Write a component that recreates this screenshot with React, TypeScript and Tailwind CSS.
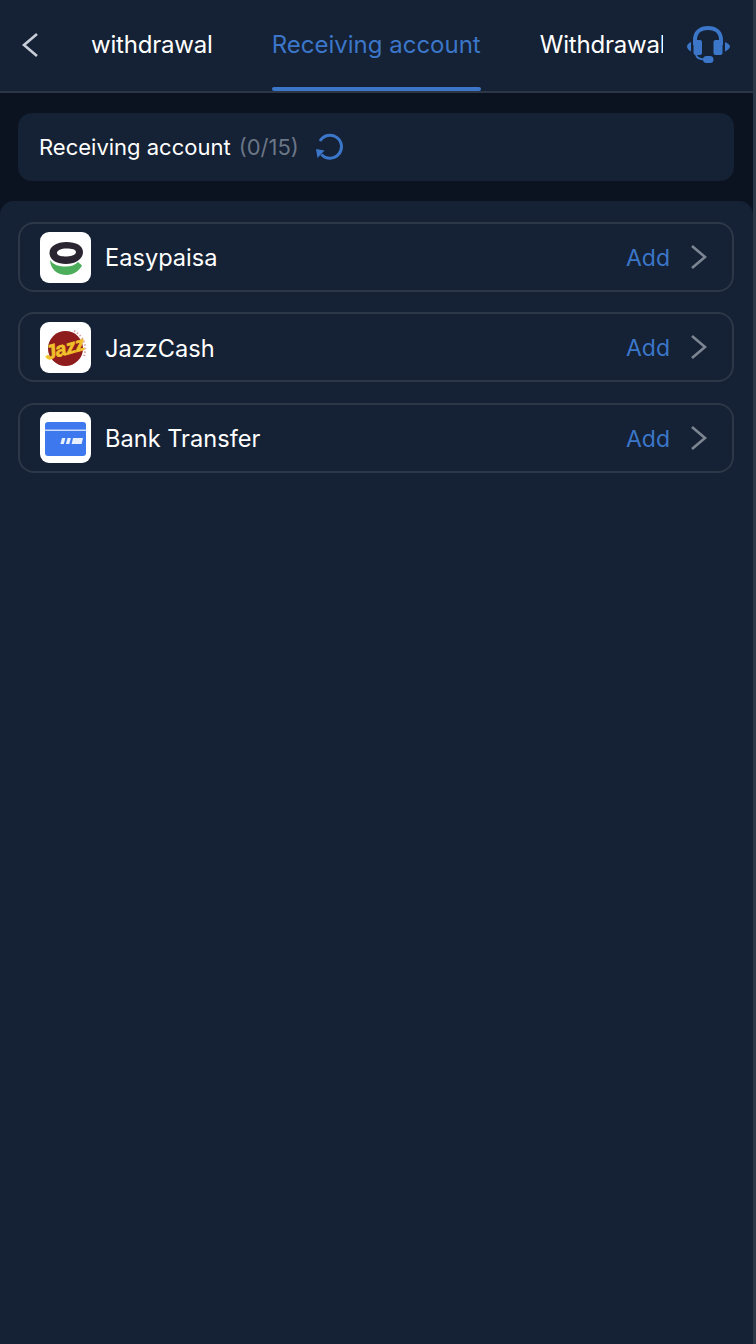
function RefreshIcon() {
  return (
    <svg width="28" height="28" viewBox="0 0 28 28" fill="none">
      <path d="M5 8A11.5 11.5 0 1 1 6.5 21.5" stroke="#3b76c9" strokeWidth="3" />
      <path d="M1 16L9.5 17.5L2.5 25Z" fill="#3b76c9" />
    </svg>
  )
}

function HeadsetIcon() {
  return (
    <svg width="46" height="40" viewBox="0 0 46 40" fill="none">
      <path d="M10 20V15C10 7 15.5 3 23 3C30.5 3 36 7 36 15V20" stroke="#3b76c9" strokeWidth="4" />
      <rect x="8.5" y="15" width="8.5" height="15" rx="2" fill="#3b76c9" />
      <rect x="28.5" y="15" width="9" height="15" rx="2" fill="#3b76c9" />
      <path d="M6 17C3.5 18 2 20 2 21.5C2 23 3.5 25.5 6 26.5Z" fill="#3b76c9" />
      <path d="M40 17C42.5 18 45 20 45 21.5C45 23 42.5 25.5 40 26.5Z" fill="#3b76c9" />
      <path d="M11 30C12 33 15 34.5 20 34.5" stroke="#3b76c9" strokeWidth="2" />
      <rect x="18" y="31" width="10.5" height="7" rx="3.5" fill="#3b76c9" />
    </svg>
  )
}

function Chevron({ dir, color }: { dir: 'left' | 'right'; color: string }) {
  return (
    <svg width="18" height="26" viewBox="0 0 18 26" fill="none">
      <path
        d={dir === 'left' ? 'M16 2L3 13L16 24' : 'M2 2L15 13L2 24'}
        stroke={color}
        strokeWidth="2.6"
      />
    </svg>
  )
}

function EasypaisaLogo() {
  return (
    <svg width="51" height="51" viewBox="0 0 51 51" fill="none">
      <path d="M10 28C10.5 37 17 43 27 43C33 43 38.5 39.5 42 33.5L38 30C35 33 31 34.5 26 34.5C19 34.5 13.5 33 10 28Z" fill="#4cae5b" />
      <path
        fillRule="evenodd"
        d="M9.5 21C9.5 14 17 10 26.5 10C36 10 43 13.5 43 20C43 27 35.5 32 26 32C17 32 9.5 28 9.5 21ZM17 21C17 23.5 21 24.5 26.5 24.5C32 24.5 36 22.5 36 20C36 17.5 32 16.5 26.5 16.5C21 16.5 17 18.5 17 21Z"
        fill="#2a2530"
      />
    </svg>
  )
}

function JazzLogo() {
  return (
    <svg width="51" height="51" viewBox="0 0 51 51" fill="none">
      <path d="M34 9A20 20 0 0 1 44 34" stroke="#d9a9a4" strokeWidth="2" strokeDasharray="1.5 2" />
      <circle cx="25.5" cy="26.5" r="17.5" fill="#8f1c1c" />
      <text
        x="25"
        y="33"
        textAnchor="middle"
        transform="rotate(-15 25 28)"
        fontFamily="'Liberation Sans', sans-serif"
        fontWeight="700"
        fontStyle="italic"
        fontSize="20"
        fill="#f0c12a"
        stroke="#f0c12a"
        strokeWidth="0.7"
        letterSpacing="-0.5"
      >
        Jazz
      </text>
    </svg>
  )
}

function BankLogo() {
  return (
    <svg width="51" height="51" viewBox="0 0 51 51" fill="none">
      <rect x="5" y="10" width="41" height="34" rx="3" fill="#3e78ee" />
      <rect x="5" y="17.5" width="41" height="1.5" fill="#c9d9fa" />
      <path d="M22 26h3.4l-1.6 6h-3.4z" fill="#e8effd" />
      <path d="M27.5 26h3.4l-1.6 6h-3.4z" fill="#e8effd" />
      <path d="M33 26h10l-1.4 6H31.6z" fill="#e8effd" />
    </svg>
  )
}

const accounts = [
  { name: 'Easypaisa', logo: <EasypaisaLogo /> },
  { name: 'JazzCash', logo: <JazzLogo /> },
  { name: 'Bank Transfer', logo: <BankLogo /> },
]

export default function App() {
  return (
    <div className="w-[756px] h-[1344px] overflow-hidden flex bg-[#2c3747] font-['Inter','Noto_Sans',sans-serif] text-[24px] text-white">
      <div className="w-[753px] h-full flex flex-col bg-[#0b1321]">
        <header className="h-[93px] shrink-0 flex items-start bg-[#152134] border-b-2 border-[#2c3645]">
          <button className="w-[76px] h-[91px] pl-[21px] pb-[2px] flex items-center">
            <Chevron dir="left" color="#c7ced8" />
          </button>
          <nav className="w-[587px] h-[91px] flex overflow-hidden gap-[59px] pl-[15px]">
            <div className="h-[91px] shrink-0 flex items-center pb-[2px] tracking-[-0.2px]">withdrawal</div>
            <div className="h-[91px] shrink-0 flex items-center pb-[2px] text-[#3b76c9] relative">
              Receiving account
              <span className="absolute left-0 right-0 bottom-0 h-[4px] rounded-full bg-[#3b76c9]" />
            </div>
            <div className="h-[91px] shrink-0 flex items-center pb-[2px] tracking-[-0.2px]">Withdrawal</div>
          </nav>
          <div className="ml-[22px] h-[91px] flex items-center pb-[1px]">
            <HeadsetIcon />
          </div>
        </header>

        <div className="ml-[18px] mr-[19px] mt-[20px] h-[68px] shrink-0 rounded-[14px] bg-[#152134] flex items-center pl-[21px]">
          <span className="text-[22px]">Receiving account</span>
          <span className="ml-[8px] text-[22px] text-[#6b7686]">(0/15)</span>
          <span className="ml-[16px] flex">
            <RefreshIcon />
          </span>
        </div>

        <main className="mt-[20px] flex-1 rounded-t-[14px] bg-[#152134] pl-[18px] pr-[19px] pt-[21px] flex flex-col gap-[20.4px]">
          {accounts.map((a) => (
            <div
              key={a.name}
              className="h-[70px] rounded-[16px] border-2 border-[#2c3747] flex items-center pl-[20px] pr-[24px]"
            >
              <div className="w-[51px] h-[51px] rounded-[9px] bg-white overflow-hidden">
                {a.logo}
              </div>
              <span className="ml-[14px] flex-1 pt-[2px] text-[23.6px]">{a.name}</span>
              <span className="pt-[2px] text-[23px] text-[#3b76c9]">Add</span>
              <span className="ml-[20px] flex">
                <Chevron dir="right" color="#7c8592" />
              </span>
            </div>
          ))}
        </main>
      </div>
    </div>
  )
}
